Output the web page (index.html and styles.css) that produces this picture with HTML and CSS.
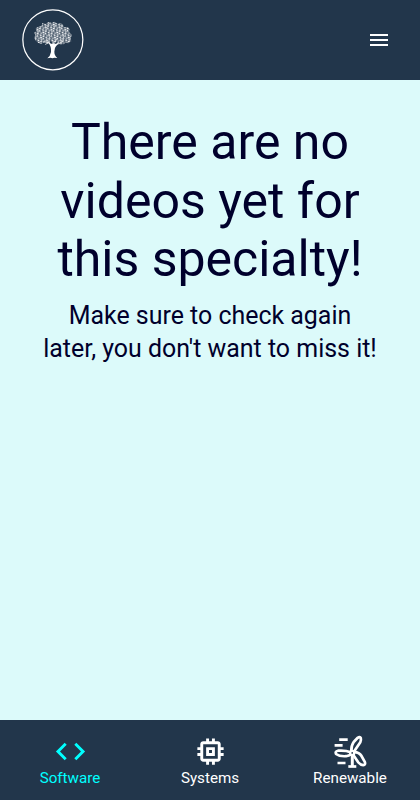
FILE: index.html
```
<!DOCTYPE html>
<html lang="en">
<head>
<meta charset="utf-8">
<meta name="viewport" content="width=device-width, initial-scale=1">
<title>Videos</title>
<link rel="stylesheet" href="styles.css">
</head>
<body>
<header class="topbar">
  <svg class="logo" viewBox="0 0 210 210" aria-label="Tree logo">
    <defs>
      <pattern id="leaves" width="19" height="17" patternUnits="userSpaceOnUse" patternTransform="rotate(24)">
        <g fill="#fff">
          <ellipse cx="4" cy="4" rx="3.300" ry="2.400" transform="rotate(35 4 4)"/>
          <ellipse cx="13" cy="3.500" rx="3.300" ry="2.400" transform="rotate(-40 13 3.500)"/>
          <ellipse cx="8" cy="10" rx="3.300" ry="2.300" transform="rotate(-20 8 10)"/>
          <ellipse cx="15.500" cy="10.500" rx="2.800" ry="2.200" transform="rotate(50 15.500 10.500)"/>
          <ellipse cx="3" cy="14.500" rx="2.500" ry="1.800"/>
          <ellipse cx="11.500" cy="14.800" rx="2.600" ry="1.800"/>
        </g>
      </pattern>
    </defs>
    <circle cx="104.500" cy="104.500" r="90" fill="none" stroke="#fff" stroke-width="3.700"/>
    <g id="canopy">
      <path fill="#fff" fill-opacity=".2" d="M61 65L71 62L73 54L84 57L91 51L102 53L110 50L118 56L128 54L135 60L139 67L149 66L155 72L154 81L161 90L158 101L160 109L150 115L144 112L137 118L125 118L116 111L105 112L97 109L88 116L79 112L70 117L60 113L52 106L48 97L53 91L48 84L55 79L53 70Z"/>
      <path fill="url(#leaves)" d="M61 65L71 62L73 54L84 57L91 51L102 53L110 50L118 56L128 54L135 60L139 67L149 66L155 72L154 81L161 90L158 101L160 109L150 115L144 112L137 118L125 118L116 111L105 112L97 109L88 116L79 112L70 117L60 113L52 106L48 97L53 91L48 84L55 79L53 70Z"/>
    </g>
    <path fill="none" stroke="#fff" stroke-width="2" stroke-linecap="round" d="M101 121Q91 108 76 110M108 119Q111 106 120 99M110 121Q125 117 136 107M95 112L82 118"/>
    <path fill="#fff" d="M90 110Q101 118 103 117L105 106L108 118Q116 117 125 111L114 124Q109 129 109 140Q109 152 118 159L109 158L103 160L98 158L88 160Q97 154 99 141Q101 125 90 110Z"/>
  </svg>
  <svg class="menu" viewBox="0 0 24 24"><path d="M3 18h18v-2H3v2zm0-5h18v-2H3v2zm0-7v2h18V6H3z"/></svg>
</header>
<main class="content">
  <h1 class="title">There are no videos yet for this specialty!</h1>
  <p class="subtitle">Make sure to check again later, you don't want to miss it!</p>
</main>
<nav class="bottom-nav">
  <a class="tab active">
    <svg viewBox="0 0 24 24"><path d="M9.400 16.600 4.800 12l4.600-4.600L8 6l-6 6 6 6 1.400-1.400zm5.200 0 4.600-4.600-4.600-4.600L16 6l6 6-6 6-1.400-1.400z"/></svg>
    <span>Software</span>
  </a>
  <a class="tab">
    <svg viewBox="0 0 24 24"><path d="M15 9H9v6h6V9zm-2 4h-2v-2h2v2zm8-2V9h-2V7c0-1.100-.9-2-2-2h-2V3h-2v2h-2V3H9v2H7c-1.100 0-2 .9-2 2v2H3v2h2v2H3v2h2v2c0 1.100.9 2 2 2h2v2h2v-2h2v2h2v-2h2c1.100 0 2-.9 2-2v-2h2v-2h-2v-2h2zm-4 6H7V7h10v10z"/></svg>
    <span>Systems</span>
  </a>
  <a class="tab">
    <svg viewBox="0 0 35 35">
      <g fill="none" stroke="currentColor" stroke-width="2.700" stroke-linejoin="round">
        <path d="M6.200 5.700h8.500M1.600 11.300h8M4.500 29h8"/>
        <path d="M18.300 17Q18.200 11.500 20.700 8L24.700 3.800Q26.900 2.300 27.800 4.200Q28.300 6 27.300 8.300L21.200 17.300"/>
        <path d="M17.500 18.200Q13 16.200 5 16.700Q1.700 17.500 3 20Q6.500 22.600 13 22.200Q16 21.500 18 20.300"/>
        <path d="M21 17.800Q26.500 18.500 28.200 21.500L31.800 27.800Q32.800 30.900 30.200 31.200Q27.500 31 25.400 28.500L20 20.600"/>
        <circle cx="19.200" cy="18.900" r="2" stroke-width="2.300"/>
        <path stroke-width="3" d="M19.300 22v10.500"/>
        <path d="M15.300 32.500h8"/>
      </g>
    </svg>
    <span>Renewable</span>
  </a>
</nav>
</body>
</html>
```
FILE: styles.css
```
* { box-sizing: border-box; }
body {
  margin: 0;
  height: 100vh;
  display: flex;
  flex-direction: column;
  background: #dcfafa;
  color: #00002c;
  font-family: Roboto, "Liberation Sans", sans-serif;
}
.topbar {
  height: 80px;
  flex: none;
  display: flex;
  align-items: center;
  justify-content: space-between;
  padding: 0 29px 0 18px;
  background: #22364b;
}
.logo { width: 70px; height: 70px; }
.menu { width: 24px; height: 24px; fill: #fff; }
.content {
  flex: 1;
  padding: 33.400px 40px 0;
  text-align: center;
}
.title {
  margin: 0;
  font-size: 50px;
  font-weight: 400;
  line-height: 1.167;
}
.subtitle {
  margin: 10.600px 0 0;
  font-size: 24.950px;
  line-height: 33.350px;
}
.bottom-nav {
  height: 80px;
  flex: none;
  display: grid;
  grid-template-columns: repeat(3, 1fr);
  background: #22364b;
}
.tab {
  display: flex;
  flex-direction: column;
  align-items: center;
  justify-content: flex-start;
  padding-top: 14px;
  color: #fff;
  font-size: 15.200px;
  line-height: 18px;
}
.tab svg { width: 35px; height: 35px; fill: currentColor; }
.tab.active { color: #00ffff; }
```
